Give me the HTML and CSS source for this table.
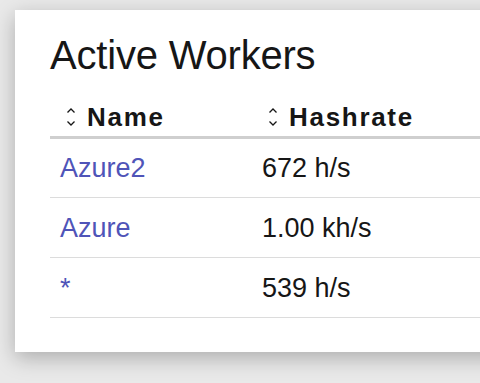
FILE: index.html
```html
<!DOCTYPE html>
<html>
<head>
<meta charset="utf-8">
<link rel="stylesheet" href="styles.css">
</head>
<body>
<div class="card">
  <h2 class="title">Active Workers</h2>
  <table class="workers">
    <thead>
      <tr>
        <th class="col-name"><span class="sort"><svg class="sort-icon" width="10" height="22" viewBox="0 0 10 22"><path d="M1.5 6.5 L5 3 L8.5 6.5" /><path d="M1.5 15.5 L5 19 L8.5 15.5" /></svg>Name</span></th>
        <th><span class="sort"><svg class="sort-icon" width="10" height="22" viewBox="0 0 10 22"><path d="M1.5 6.5 L5 3 L8.5 6.5" /><path d="M1.5 15.5 L5 19 L8.5 15.5" /></svg>Hashrate</span></th>
      </tr>
    </thead>
    <tbody>
      <tr><td><a class="worker" href="#">Azure2</a></td><td>672 h/s</td></tr>
      <tr><td><a class="worker" href="#">Azure</a></td><td>1.00 kh/s</td></tr>
      <tr><td><a class="worker" href="#">*</a></td><td>539 h/s</td></tr>
    </tbody>
  </table>
</div>
</body>
</html>
```
FILE: styles.css
```css
html {
  margin: 0;
  padding: 0;
  background: #e9e9e9;
  overflow: hidden;
}
body {
  margin: 0;
  font-family: "Liberation Sans", Arial, sans-serif;
  color: #161616;
  padding: 10px 0 40px 15px;
}
.card {
  width: 560px;
  height: 342px;
  box-sizing: border-box;
  background: #fff;
  padding: 25px 0 0 35px;
  box-shadow: 0 6px 20px rgba(0, 0, 0, 0.26);
}
.title {
  margin: 0 0 19px 0;
  font-size: 40px;
  line-height: 40px;
  font-weight: normal;
  letter-spacing: -0.2px;
}
.workers {
  border-collapse: collapse;
  width: 520px;
}
.workers th {
  text-align: left;
  font-size: 26px;
  line-height: 26px;
  font-weight: bold;
  letter-spacing: 1.7px;
  padding: 10px 0 4px 16px;
  border-bottom: 3px solid #cfcfcf;
}
.workers th.col-name {
  width: 186px;
}
.sort {
  display: inline-flex;
  align-items: center;
}
.sort-icon {
  margin-right: 11px;
  fill: none;
  stroke: #161616;
  stroke-width: 1.3;
}
.workers td {
  font-size: 27px;
  line-height: 27px;
  height: 60px;
  box-sizing: border-box;
  padding: 1px 0 0 10px;
  vertical-align: middle;
  border-bottom: 1px solid #dcdcdc;
}
.worker {
  color: #4f54b8;
  text-decoration: none;
}
```
